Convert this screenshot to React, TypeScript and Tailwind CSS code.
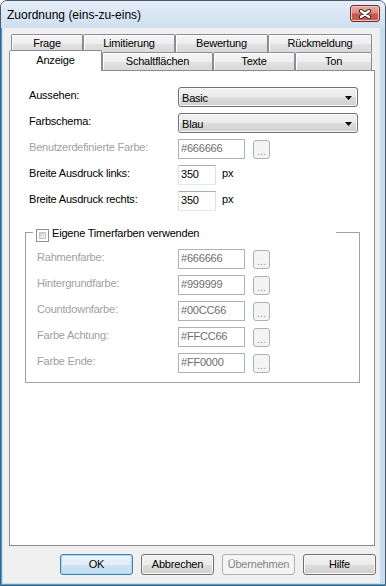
import React from "react";

const btnGrad =
  "bg-[linear-gradient(#f2f2f2_0%,#ebebeb_50%,#dddddd_50%,#cfcfcf_100%)]";

function BackTab({ className, children }: { className: string; children: React.ReactNode }) {
  return (
    <div
      className={
        "flex items-center justify-center border border-b-0 border-[#898c95] rounded-t-[2px] bg-[linear-gradient(#f5f5f5_0%,#eeeeee_50%,#e2e2e2_50%,#d9d9d9_100%)] shadow-[inset_1px_1px_0_#ffffff] " +
        className
      }
    >
      {children}
    </div>
  );
}

function Combo({ value }: { value: string }) {
  return (
    <div
      className={
        "w-[180px] h-[20px] rounded-[3px] border border-[#707070] shadow-[inset_0_0_0_1px_#fafafa] flex items-center pt-[2px] pl-[3px] pr-[5px] " +
        btnGrad
      }
    >
      <span className="flex-1">{value}</span>
      <svg width="7" height="4" viewBox="0 0 7 4" className="mb-[1px]">
        <path d="M0 0 L7 0 L3.5 4 Z" fill="#000" />
      </svg>
    </div>
  );
}

function TextBox({
  value,
  className,
  disabled,
}: {
  value: string;
  className: string;
  disabled?: boolean;
}) {
  return (
    <div
      className={
        "h-[20px] border bg-white flex items-center pb-[1px] pl-[2px] " +
        (disabled
          ? "border-[#adb2b5] text-[#6d6d6d] "
          : "border-t-[#abadb3] border-l-[#e2e3ea] border-r-[#dbdfe6] border-b-[#e3e9ef] text-black ") +
        className
      }
    >
      {value}
    </div>
  );
}

function DotsBtn() {
  return (
    <div className="ml-[8px] mt-[1px] w-[17px] h-[19px] rounded-[3px] border border-[#adb2b5] bg-[#f4f4f4] flex items-end justify-center pb-[2px] text-[#9a9a9a] leading-[10px] tracking-normal">
      ...
    </div>
  );
}

function ColorRow({ label, value }: { label: string; value: string }) {
  return (
    <div className="flex h-[20px]">
      <div className="w-[141px] leading-[17px] text-[#a0a0a0]">{label}</div>
      <TextBox value={value} className="w-[67px]" disabled />
      <DotsBtn />
    </div>
  );
}

function Button({
  children,
  kind,
}: {
  children: React.ReactNode;
  kind?: "default" | "disabled";
}) {
  const cls =
    kind === "default"
      ? "border-[#3c7fb1] bg-[linear-gradient(#ebf4fc_0%,#e1edf8_50%,#d1e3f2_50%,#c5dbee_100%)] shadow-[inset_0_0_0_1px_#a9dbf5] text-black"
      : kind === "disabled"
      ? "border-[#adb2b5] bg-[#f4f4f4] text-[#838383]"
      : "border-[#707070] bg-[linear-gradient(#f2f2f2_0%,#ebebeb_50%,#dddddd_50%,#cfcfcf_100%)] shadow-[inset_0_0_0_1px_#fbfbfb] text-black";
  return (
    <div
      className={
        "w-[73px] h-[21px] rounded-[3px] border flex items-center justify-center " + cls
      }
    >
      {children}
    </div>
  );
}

export default function App() {
  return (
    <div className="w-[386px] h-[586px] flex flex-col border border-[#4d5a6b] rounded-t-[7px] bg-[#c8dcf1] overflow-hidden font-['Liberation_Sans',Arial,sans-serif] text-[11px] tracking-[-0.2px] text-black">
      {/* Title bar */}
      <div className="h-[27px] shrink-0 flex items-start bg-[linear-gradient(#e4eef8,#cfdff0)]">
        <div className="pl-[6px] h-[27px] flex items-center text-[12px] tracking-normal text-[#000]">
          Zuordnung (eins-zu-eins)
        </div>
        <div className="ml-auto mr-[5px] mt-[4px] w-[30px] h-[17px] rounded-[3px] border border-[#6a2f2a] bg-[linear-gradient(#eaaaa2_0%,#dc8c84_45%,#c9574d_55%,#c8584f_100%)] shadow-[inset_0_0_0_1px_#f2c4bd] flex items-center justify-center">
          <svg width="14" height="10" viewBox="0 0 14 10">
            <path d="M3 2 L11 8 M11 2 L3 8" stroke="#3a2a2a" strokeWidth="4.2" strokeLinecap="round" />
            <path d="M3 2 L11 8 M11 2 L3 8" stroke="#ffffff" strokeWidth="2.2" strokeLinecap="round" />
          </svg>
        </div>
      </div>

      {/* Body */}
      <div className="flex-1 flex border-l border-b border-[#3ca6e4] pl-[1px] pb-[1px]">
        <div className="w-[377px] h-[555px] bg-[#f0f0f0] pt-[6px] pl-[6px]">
          {/* Tabs */}
          <div className="w-[366px]">
            <div className="flex h-[18px] pl-[2px]">
              <BackTab className="w-[72px]">Frage</BackTab>
              <BackTab className="w-[92px]">Limitierung</BackTab>
              <BackTab className="w-[93px]">Bewertung</BackTab>
              <BackTab className="w-[104px]">Rückmeldung</BackTab>
            </div>
            <div className="flex h-[18px] items-end">
              <div className="relative z-10 w-[93px] h-[21px] -mb-px border border-b-0 border-[#898c95] rounded-t-[2px] bg-white flex items-center justify-center pb-[2px]">
                Anzeige
              </div>
              <BackTab className="w-[111px] h-[18px]">Schaltflächen</BackTab>
              <BackTab className="w-[82px] h-[18px]">Texte</BackTab>
              <BackTab className="w-[77px] h-[18px]">Ton</BackTab>
            </div>

            {/* Panel */}
            <div className="w-[366px] h-[476px] border border-[#898c95] bg-white pt-[16px]">
              <div className="ml-[19px] flex flex-col gap-[6px]">
                <div className="flex h-[20px]">
                  <div className="w-[149px] leading-[17px]">Aussehen:</div>
                  <Combo value="Basic" />
                </div>
                <div className="flex h-[20px]">
                  <div className="w-[149px] leading-[17px]">Farbschema:</div>
                  <Combo value="Blau" />
                </div>
                <div className="flex h-[20px]">
                  <div className="w-[149px] leading-[17px] text-[#a0a0a0]">Benutzerdefinierte Farbe:</div>
                  <TextBox value="#666666" className="w-[67px]" disabled />
                  <DotsBtn />
                </div>
                <div className="flex h-[20px]">
                  <div className="w-[149px] leading-[17px]">Breite Ausdruck links:</div>
                  <TextBox value="350" className="w-[38px]" />
                  <div className="ml-[6px] leading-[17px]">px</div>
                </div>
                <div className="flex h-[20px]">
                  <div className="w-[149px] leading-[17px]">Breite Ausdruck rechts:</div>
                  <TextBox value="350" className="w-[38px]" />
                  <div className="ml-[6px] leading-[17px]">px</div>
                </div>
              </div>

              {/* Group box */}
              <div className="relative mt-[21px] ml-[15px] w-[335px] border border-[#a0a0a0] pt-[16px] pb-[9px] pl-[11px] flex flex-col gap-[6px]">
                <div className="absolute left-[7px] top-[-5px] w-[303px] h-[15px] bg-white flex items-center pl-[3px]">
                  <div className="w-[13px] h-[13px] border border-[#8f8f8f] bg-white p-[2px]">
                    <div className="w-full h-full border border-[#c2c6cb] bg-[linear-gradient(135deg,#cfd3d8,#f4f5f6)]" />
                  </div>
                  <div className="ml-[3px] mb-[4px]">Eigene Timerfarben verwenden</div>
                </div>
                <ColorRow label="Rahmenfarbe:" value="#666666" />
                <ColorRow label="Hintergrundfarbe:" value="#999999" />
                <ColorRow label="Countdownfarbe:" value="#00CC66" />
                <ColorRow label="Farbe Achtung:" value="#FFCC66" />
                <ColorRow label="Farbe Ende:" value="#FF0000" />
              </div>
            </div>

            {/* Buttons */}
            <div className="mt-[8px] flex justify-end gap-[8px] pr-[0px] -mr-[1px]">
              <Button kind="default">OK</Button>
              <Button>Abbrechen</Button>
              <Button kind="disabled">Übernehmen</Button>
              <Button>Hilfe</Button>
            </div>
          </div>
        </div>
      </div>
    </div>
  );
}
